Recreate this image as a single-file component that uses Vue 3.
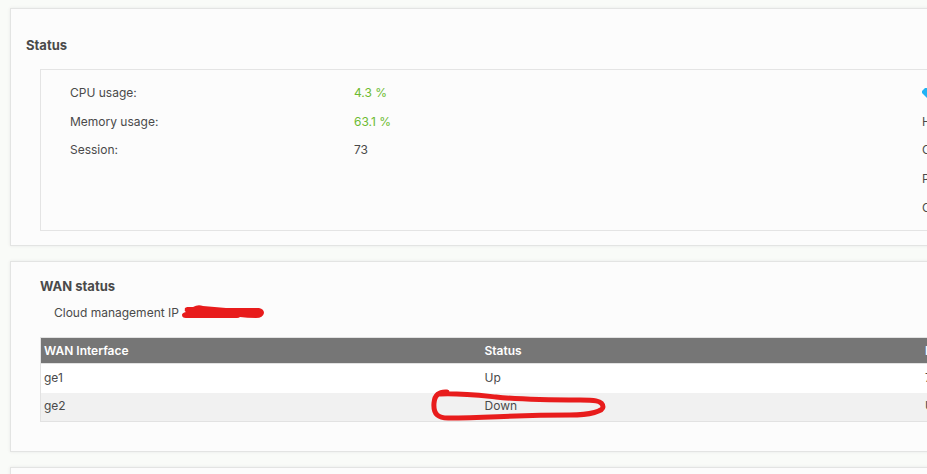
<script setup>
const metrics = [
  { label: 'CPU usage:', value: '4.3 %', good: true },
  { label: 'Memory usage:', value: '63.1 %', good: true },
  { label: 'Session:', value: '73', good: false },
]
const details = ['H', 'C', 'P', 'C']
const interfaces = [
  { name: 'ge1', status: 'Up', ip: '7' },
  { name: 'ge2', status: 'Down', ip: 'U' },
]
</script>

<template>
  <main class="page">
    <section class="panel">
      <h2 class="title">Status</h2>
      <div class="info">
        <dl class="metrics">
          <div v-for="m in metrics" :key="m.label" class="metric">
            <dt>{{ m.label }}</dt>
            <dd :class="{ good: m.good }">{{ m.value }}</dd>
          </div>
        </dl>
        <ul class="details">
          <li>
            <svg class="gem" viewBox="0 0 14 12" aria-hidden="true">
              <path d="M3 1H11L14 4V6L8 12H6L2 8L0 6V4L1 3Z" />
            </svg>
          </li>
          <li v-for="(d, i) in details" :key="i">{{ d }}</li>
        </ul>
      </div>
    </section>

    <section class="panel wan">
      <h2 class="title">WAN status</h2>
      <p class="cloud">
        <span>Cloud management IP</span>
        <svg class="redaction" viewBox="0 0 84 16" aria-hidden="true">
          <path d="M4 4C3 3 5 2 8 2L12 2Q17 -1 22 1L45 3H78Q83 4 83 8Q82 13 75 13Q66 13 59 12Q58 13 56 13H5Q1 13 1 10Q1 8 5 7Q3 6 4 4Z" />
        </svg>
      </p>
      <table class="grid">
        <thead>
          <tr>
            <th scope="col">WAN Interface</th>
            <th scope="col">Status</th>
            <th scope="col">I</th>
            <th scope="col"></th>
          </tr>
        </thead>
        <tbody>
          <tr v-for="row in interfaces" :key="row.name">
            <td>{{ row.name }}</td>
            <td>
              <span class="state">
                {{ row.status }}
                <svg v-if="row.status === 'Down'" class="mark" viewBox="0 0 176 34" aria-hidden="true">
                  <path d="M17 4Q5 3 4 15C3 27 9 30 18 30C60 30 80 27 140 27C161 27 173 23 173 19C173 12 162 12 150 12C120 12 94 12 66 9C46 7 28 5 10 6" />
                </svg>
              </span>
            </td>
            <td>{{ row.ip }}</td>
            <td></td>
          </tr>
        </tbody>
      </table>
    </section>

    <section class="panel next"></section>
  </main>
</template>

<style>
body {
  overflow: hidden;
  background: #f9fbf8;
}
</style>

<style scoped>
.page {
  display: flex;
  flex-direction: column;
  gap: 15px;
  min-width: 1844px;
  padding: 8px 10px;
  box-sizing: border-box;
  color: #4a4a4a;
  font: 12px/16px Inter, "Liberation Sans", sans-serif;
}
.panel {
  padding: 26px 29px 14px 15px;
  border: 1px solid #e3e4e3;
  background: #fcfcfc;
  box-shadow: 0 0 3px #e8eae7;
}
.title {
  margin: 0;
  font-size: 13px;
  line-height: 20px;
  font-weight: 700;
}
.info {
  display: grid;
  grid-template-columns: 1fr 1fr;
  margin: 14px 0 0 14px;
  padding: 9px 29px 8px;
  border: 1px solid #e4e4e4;
}
.metrics,
.details {
  display: grid;
  grid-template-rows: repeat(5, 1fr);
  height: 143px;
  margin: 0;
  padding: 0;
  list-style: none;
}
.metric {
  display: grid;
  grid-template-columns: 1fr 2fr;
  align-items: center;
}
.metric dd {
  margin: 0;
}
.metric .good {
  color: #6dbb32;
}
.details li {
  display: flex;
  align-items: center;
}
.gem {
  width: 14px;
  height: 12px;
  fill: #22b3f5;
}
.wan {
  padding: 14px 29px 29px;
}
.cloud {
  display: flex;
  align-items: center;
  gap: 2px;
  height: 16px;
  margin: 9px 0 0 14px;
}
.redaction {
  width: 84px;
  height: 16px;
  fill: #e81c1c;
}
.grid {
  width: 100%;
  margin-top: 16px;
  border: 1px solid #e2e2e2;
  border-spacing: 0;
  table-layout: fixed;
}
.grid th,
.grid td {
  box-sizing: border-box;
  height: 28px;
  padding: 0 3px 2px;
  text-align: left;
}
.grid th {
  height: 26px;
  padding: 0 3px;
  border-bottom: 1px solid #e2e2e2;
  background: #767676;
  color: #fff;
  font-weight: 600;
}
.grid tbody tr {
  background: #fff;
}
.grid tbody tr:nth-child(odd) td {
  height: 29px;
}
.grid tbody tr:nth-child(even) {
  background: #f1f1f1;
}
.state {
  position: relative;
}
.mark {
  position: absolute;
  top: -10px;
  left: -55px;
  width: 176px;
  height: 34px;
  fill: none;
  stroke: #e81c1c;
  stroke-width: 5;
  stroke-linecap: round;
  stroke-linejoin: round;
}
.next {
  height: 40px;
}
</style>
